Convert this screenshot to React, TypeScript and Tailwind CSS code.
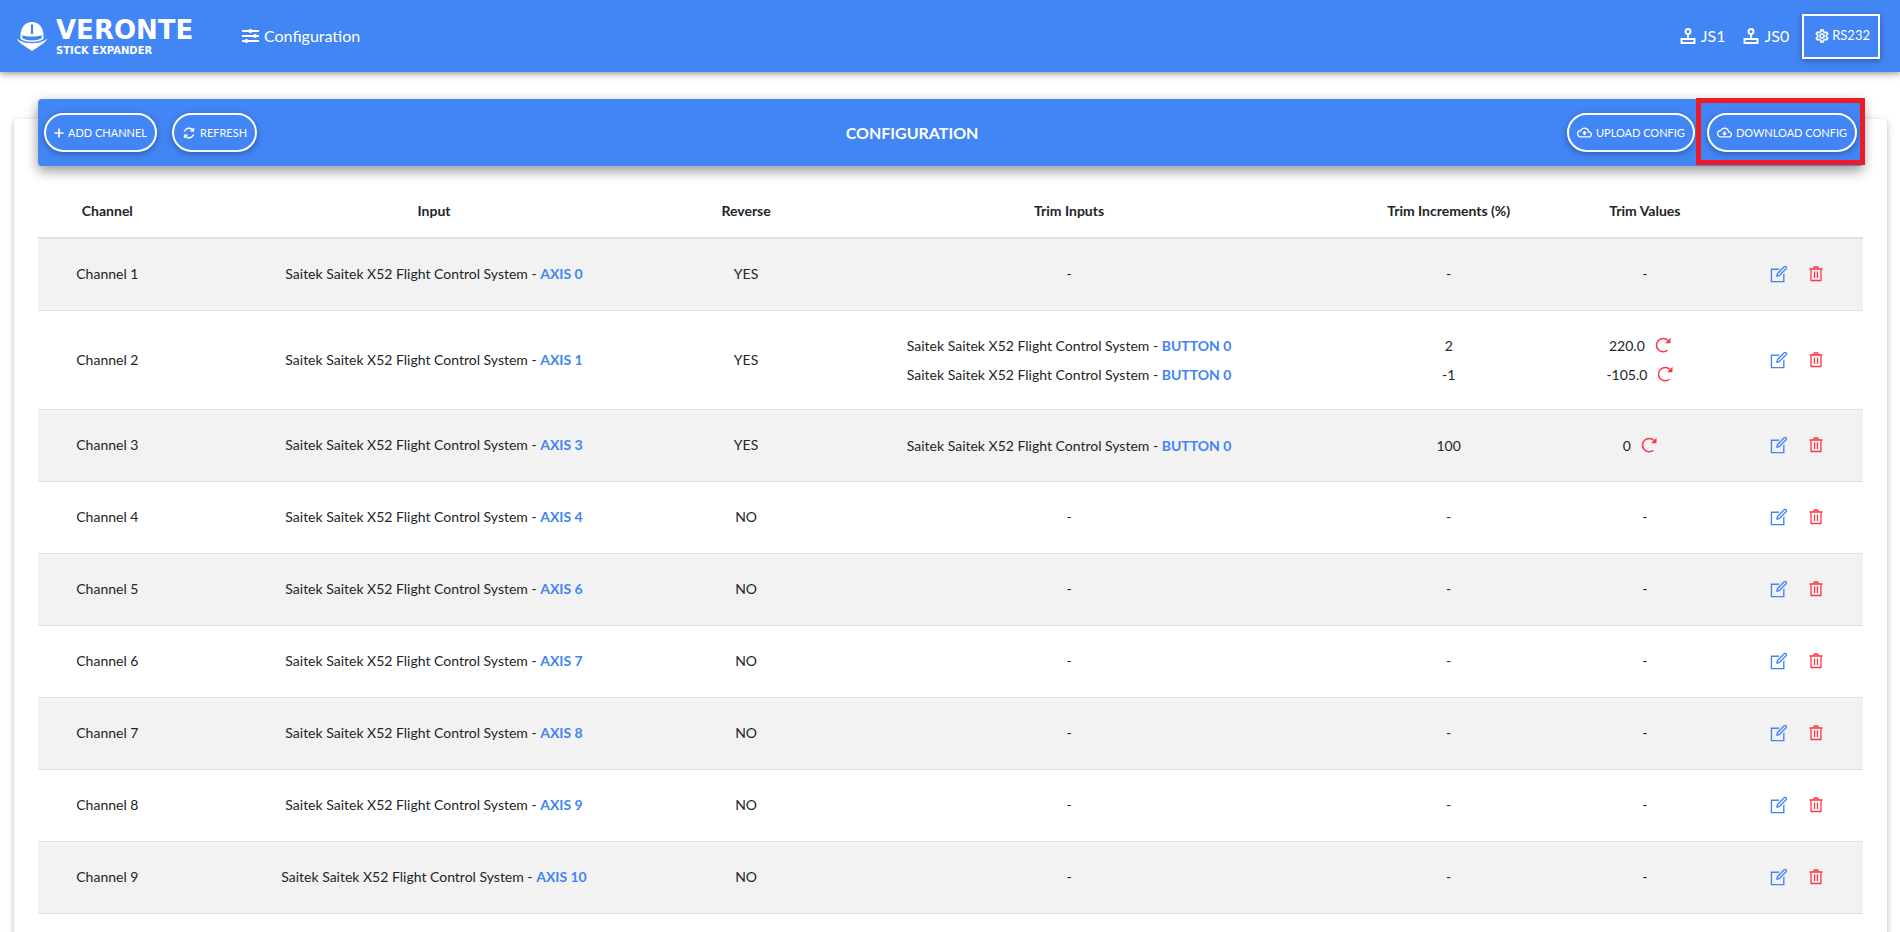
import type { ReactNode } from "react";
import { LiaCogSolid, LiaEditSolid, LiaSyncSolid } from "react-icons/lia";
import { MdOutlineCloudDownload, MdOutlineCloudUpload } from "react-icons/md";

const DEVICE = "Saitek Saitek X52 Flight Control System";

type Trim = { button: string; increment: string; value: string };
type Channel = { name: string; axis: string; reverse: boolean; trims: Trim[] };

const CHANNELS: Channel[] = [
  { name: "Channel 1", axis: "AXIS 0", reverse: true, trims: [] },
  {
    name: "Channel 2",
    axis: "AXIS 1",
    reverse: true,
    trims: [
      { button: "BUTTON 0", increment: "2", value: "220.0" },
      { button: "BUTTON 0", increment: "-1", value: "-105.0" },
    ],
  },
  {
    name: "Channel 3",
    axis: "AXIS 3",
    reverse: true,
    trims: [{ button: "BUTTON 0", increment: "100", value: "0" }],
  },
  { name: "Channel 4", axis: "AXIS 4", reverse: false, trims: [] },
  { name: "Channel 5", axis: "AXIS 6", reverse: false, trims: [] },
  { name: "Channel 6", axis: "AXIS 7", reverse: false, trims: [] },
  { name: "Channel 7", axis: "AXIS 8", reverse: false, trims: [] },
  { name: "Channel 8", axis: "AXIS 9", reverse: false, trims: [] },
  { name: "Channel 9", axis: "AXIS 10", reverse: false, trims: [] },
];

function HelmetMark() {
  return (
    <svg viewBox="0 0 32 30" className="h-[30px] w-8" fill="currentColor" aria-hidden="true">
      <path
        fillRule="evenodd"
        d="M4.5 18C3.600 7.500 8.500 1 16 1s12.400 6.500 11.500 17C24 20.300 20 21 16 21S8 20.300 4.500 18zM14.900 3.500v9.500h2.200v-9.500zM6.300 14.200v3.100c3 1.700 6.200 2.200 9.700 2.200s6.700-.5 9.700-2.200v-3.100c-3 1-6 1.300-9.700 1.300s-6.700-.3-9.700-1.300z"
      />
      <path d="M.5 17.500c4.500 3.300 9.500 4.800 15.500 4.800s11-1.500 15.500-4.800c-1.800 3-3.800 5-6.500 6.500L16 30l-9-6c-2.700-1.500-4.700-3.500-6.500-6.500z" />
    </svg>
  );
}

function SlidersIcon() {
  return (
    <svg viewBox="0 0 18 16" className="h-4 w-[18px]" fill="currentColor" aria-hidden="true">
      <path d="M1 2h17v2H1zM1 7h17v2H1zM1 12h17v2H1z" />
      <circle cx="9.500" cy="3" r="2" />
      <circle cx="14" cy="8" r="2" />
      <circle cx="5.500" cy="13" r="2" />
    </svg>
  );
}

function JoystickIcon() {
  return (
    <svg
      viewBox="0 0 16 16"
      className="size-4"
      fill="none"
      stroke="currentColor"
      strokeWidth="1.900"
      aria-hidden="true"
    >
      <circle cx="8" cy="3.500" r="2.500" />
      <path d="M8 6v5M1.500 11h13v4h-13z" />
    </svg>
  );
}

function PlusIcon() {
  return (
    <svg viewBox="0 0 10 10" className="size-[10px]" stroke="currentColor" strokeWidth="1.700" aria-hidden="true">
      <path d="M5 .5v9M.5 5h9" />
    </svg>
  );
}

function TrashIcon() {
  return (
    <svg
      viewBox="0 0 16 16"
      className="size-4"
      fill="none"
      stroke="currentColor"
      strokeWidth="1.300"
      strokeLinejoin="round"
      aria-hidden="true"
    >
      <path d="M1.500 3h13M5.500 3l.7-2h3.600l.7 2M3 3v11.500h10V3M6.500 5.500v6.500M9.500 5.500v6.500" />
    </svg>
  );
}

function ResetIcon() {
  return (
    <svg viewBox="0 0 16 16" className="size-4" fill="none" stroke="currentColor" strokeWidth="1.500" aria-hidden="true">
      <path d="M12.500 13.300A6.700 6.700 0 1 1 13 3.500" />
      <path d="M15.500 .8v5.400h-5.400z" fill="currentColor" stroke="none" />
    </svg>
  );
}

function PillButton({ icon, children }: { icon: ReactNode; children: ReactNode }) {
  return (
    <button
      type="button"
      className="flex h-[39px] items-center gap-1 rounded-[20px] border-2 border-white px-2 text-[11px] uppercase shadow-[0_2px_6px_rgba(0,0,0,0.3)]"
    >
      {icon}
      {children}
    </button>
  );
}

function InputLabel({ control }: { control: string }) {
  return (
    <>
      {DEVICE} - <b className="font-bold text-[#4285f4]">{control}</b>
    </>
  );
}

function ChannelRow({ channel }: { channel: Channel }) {
  const { name, axis, reverse, trims } = channel;
  return (
    <tr className="h-[72px] border-b border-[#dee2e6] odd:bg-[#f2f2f2]">
      <td>{name}</td>
      <td>
        <InputLabel control={axis} />
      </td>
      <td>{reverse ? "YES" : "NO"}</td>
      <td className={trims.length > 1 ? "py-5" : ""}>
        {trims.length === 0 && "-"}
        {trims.map((trim, i) => (
          <div key={i} className="leading-[29px]">
            <InputLabel control={trim.button} />
          </div>
        ))}
      </td>
      <td>
        {trims.length === 0 && "-"}
        {trims.map((trim, i) => (
          <div key={i} className="leading-[29px]">
            {trim.increment}
          </div>
        ))}
      </td>
      <td>
        {trims.length === 0 && "-"}
        {trims.map((trim, i) => (
          <div key={i} className="flex items-center justify-center gap-[10px] pr-[10px] leading-[29px]">
            {trim.value}
            <button type="button" aria-label="Reset trim" className="text-[#ff3547]">
              <ResetIcon />
            </button>
          </div>
        ))}
      </td>
      <td>
        <div className="flex items-center justify-center gap-[18px]">
          <button type="button" aria-label={"Edit " + name} className="text-[#4285f4]">
            <LiaEditSolid className="size-[22px]" />
          </button>
          <button type="button" aria-label={"Delete " + name} className="text-[#ff3547]">
            <TrashIcon />
          </button>
        </div>
      </td>
    </tr>
  );
}

export default function App() {
  return (
    <div className="h-screen overflow-hidden bg-white font-['Lato',sans-serif] text-sm text-[#212529]">
      <header className="flex h-[72px] items-center justify-between bg-[#4285f4] pl-4 pr-5 text-base text-white shadow-[0_2px_5px_rgba(0,0,0,0.25),0_2px_10px_rgba(0,0,0,0.16)]">
        <div className="flex items-center">
          <a href="#" className="flex items-center gap-2 font-['DejaVu_Sans',sans-serif] font-bold">
            <HelmetMark />
            <span className="flex w-[160px] flex-col">
              <span className="text-[26px] leading-[30px]">VERONTE</span>
              <span className="text-[10px] leading-3">STICK EXPANDER</span>
            </span>
          </a>
          <nav className="ml-[25px]">
            <a href="#" className="flex items-center gap-[5px]">
              <SlidersIcon />
              Configuration
            </a>
          </nav>
        </div>
        <div className="flex items-center">
          <a href="#" className="mr-[18px] flex items-center gap-[5px]">
            <JoystickIcon />
            JS1
          </a>
          <a href="#" className="mr-[13px] flex items-center gap-[5px]">
            <JoystickIcon />
            JS0
          </a>
          <button
            type="button"
            className="flex h-[45px] items-center gap-[2px] border-2 border-white pl-[10px] pr-2 text-[13px] shadow-[0_2px_6px_rgba(0,0,0,0.3)]"
          >
            <LiaCogSolid className="size-4" stroke="currentColor" strokeWidth={1.5} />
            RS232
          </button>
        </div>
      </header>

      <main className="ml-[14px] mr-[13px] mt-[47px] flex flex-col rounded-[4px] px-6 pb-16 shadow-[0_2px_5px_rgba(0,0,0,0.16),0_2px_10px_rgba(0,0,0,0.12)]">
        <div className="-mt-5 flex h-[67px] items-center justify-between rounded-[4px] bg-[#4285f4] px-[6px] text-white shadow-[0_5px_11px_rgba(0,0,0,0.25),0_4px_15px_rgba(0,0,0,0.2)]">
          <div className="flex gap-[15px]">
            <PillButton icon={<PlusIcon />}>Add channel</PillButton>
            <PillButton icon={<LiaSyncSolid className="size-[14px]" stroke="currentColor" strokeWidth={1.5} />}>
              Refresh
            </PillButton>
          </div>
          <h1 className="text-base font-bold">CONFIGURATION</h1>
          <div className="flex justify-end gap-3">
            <PillButton icon={<MdOutlineCloudUpload className="size-[15px]" />}>Upload config</PillButton>
            <div className="relative">
              <PillButton icon={<MdOutlineCloudDownload className="size-[15px]" />}>Download config</PillButton>
              <div className="pointer-events-none absolute -bottom-[13px] -left-[11px] -right-2 -top-[15px] border-[5px] border-[#ed1c24]" />
            </div>
          </div>
        </div>

        <table className="w-full table-fixed border-collapse text-center">
          <colgroup>
            <col className="w-[7.600%]" />
            <col className="w-[28.200%]" />
            <col className="w-[6%]" />
            <col className="w-[29.400%]" />
            <col className="w-[12.200%]" />
            <col className="w-[9.300%]" />
            <col className="w-[7.300%]" />
          </colgroup>
          <thead>
            <tr className="h-[72px] border-b-2 border-[#dee2e6] align-bottom">
              <th className="pb-4 font-bold">Channel</th>
              <th className="pb-4 font-bold">Input</th>
              <th className="pb-4 font-bold">Reverse</th>
              <th className="pb-4 font-bold">Trim Inputs</th>
              <th className="pb-4 font-bold">Trim Increments (%)</th>
              <th className="pb-4 font-bold">Trim Values</th>
              <th aria-label="Actions" />
            </tr>
          </thead>
          <tbody>
            {CHANNELS.map((channel) => (
              <ChannelRow key={channel.name} channel={channel} />
            ))}
          </tbody>
        </table>
      </main>
    </div>
  );
}
